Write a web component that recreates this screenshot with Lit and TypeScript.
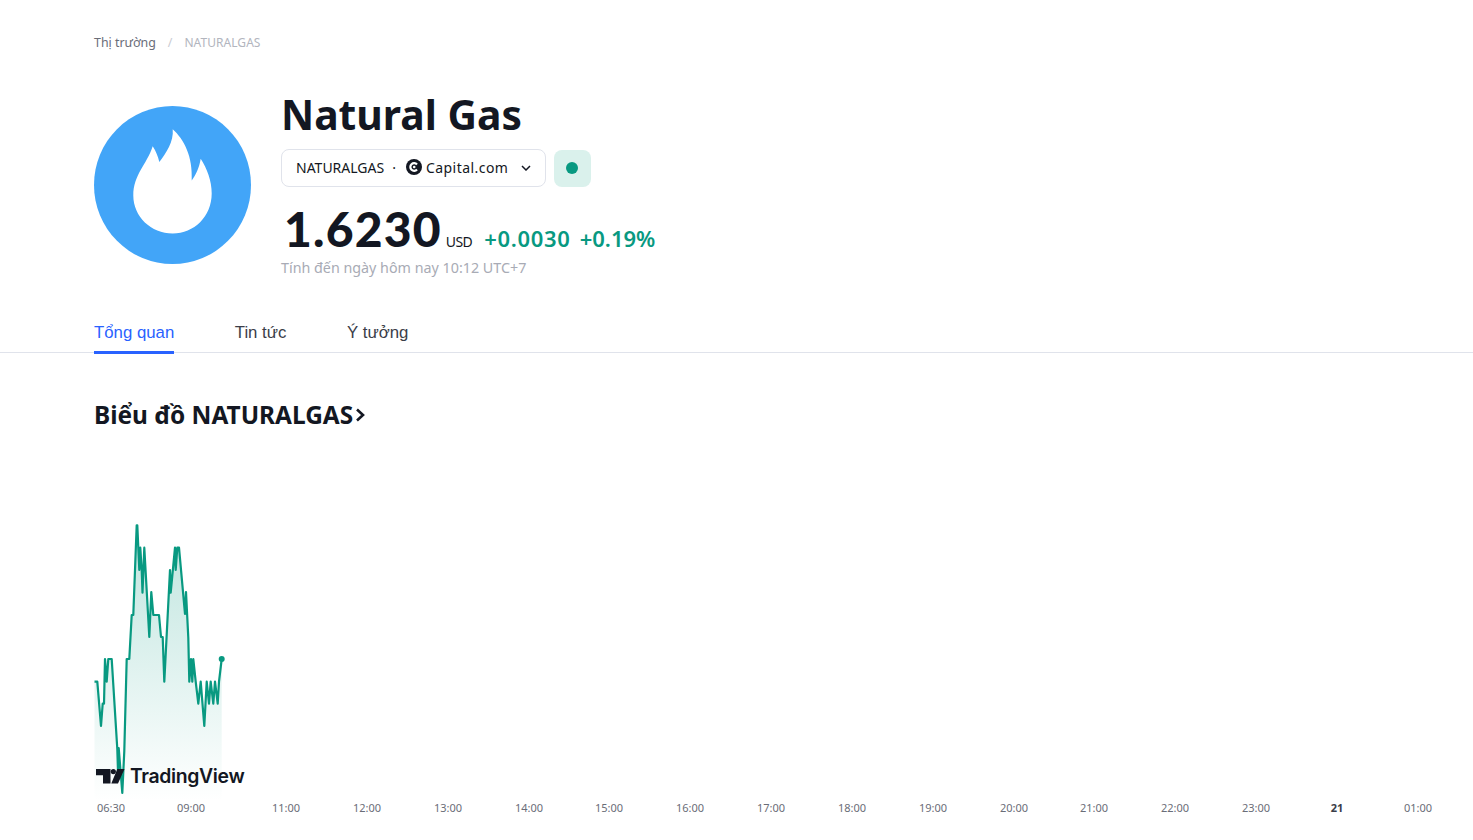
import { LitElement, html, css, svg } from "lit";
import { customElement } from "lit/decorators.js";

const PTS: [number, number][] = [[94.5,680.7],[97.3,680.7],[101,725],[102.7,702.7],[104,702.7],[105,658],[106.7,680.7],[108.3,658],[111.7,658],[117.3,748],[118,770],[118.7,747],[122.3,792],[124.3,750],[126.7,658],[129.3,658],[131.7,614],[133.3,614],[136.7,524.3],[137.3,524.3],[139.3,569],[140.3,546.7],[141.7,569],[142.5,591.7],[144.3,546.7],[149.3,636],[151.3,591],[153.3,614],[159,614],[161,636],[162.7,636],[164.3,680.7],[170,569],[170.7,591.7],[175,546.7],[175.7,569],[177.3,546.7],[179,546.7],[185,613],[186,591],[188.3,636.7],[189.3,680.7],[191,658],[192.3,680.7],[193.3,658],[195.7,680.7],[198.3,702.7],[200.7,680.7],[204.3,725],[206.7,680.7],[209,702.7],[210.7,680.7],[213.3,702.7],[215,680.7],[217.7,702.7],[219,680.7],[221.7,658]];
const TOP = 500;
const line = PTS.map(([x, y], i) => `${i ? "L" : "M"}${x} ${y - TOP}`).join(" ");
const area = `${line} L221.7 300 L94.5 300 Z`;
const TICKS: [string, number, boolean?][] = [["06:30",111],["09:00",191],["11:00",286],["12:00",367],["13:00",448],["14:00",529],["15:00",609],["16:00",690],["17:00",771],["18:00",852],["19:00",933],["20:00",1014],["21:00",1094],["22:00",1175],["23:00",1256],["21",1337,true],["01:00",1418]];

@customElement("app-root")
export class AppRoot extends LitElement {
  static styles = css`
    :host { display: block; height: 840px; overflow: hidden; background: #fff; color: #131722; font-family: "Noto Sans", "Liberation Sans", sans-serif; }
    .wrap { padding: 0 0 0 94px; }
    .crumbs { display: flex; align-items: center; height: 20px; padding-top: 32px; font-size: 12.4px; color: #6a6d78; }
    .crumbs .sep { margin: 0 12px; color: #c9cbd2; }
    .crumbs .cur { color: #b2b5be; font-size: 12px; letter-spacing: 0.05px; }
    .head { display: flex; gap: 30px; padding-top: 34px; }
    .logo { width: 157px; height: 158px; flex: none; margin-top: 20px; display: block; }
    .info { display: flex; flex-direction: column; align-items: flex-start; margin-top: 0; }
    h1 { margin: 0; font-size: 40.8px; line-height: 56px; font-weight: 700; letter-spacing: 0; }
    .pills { display: flex; align-items: flex-end; gap: 8px; margin-top: 7px; }
    .sym { display: flex; align-items: center; box-sizing: border-box; height: 38px; width: 265px; padding: 0 14px 2px; border: 1px solid #e0e3eb; border-radius: 8px; font-size: 14px; }
    .sym .dot { margin: 0 10px 0 8px; }
    .sym .ex { margin-right: 4px; flex: none; }
    .sym .chev { margin-left: auto; margin-top: 2px; flex: none; }
    .sym .ename { letter-spacing: 0.45px; }
    .status { display: flex; align-items: center; justify-content: center; width: 37px; height: 37px; border-radius: 8px; background: #daf1ec; }
    .status i { width: 12px; height: 12px; border-radius: 50%; background: #089981; margin: -2px 1px 0 0; }
    .price { display: flex; align-items: baseline; margin: 27px 0 0 3px; line-height: 30px; }
    .val { font-family: "Lato", "Noto Sans", sans-serif; font-size: 48px; font-weight: 900; letter-spacing: 1.2px; }
    .unit { font-size: 14px; letter-spacing: -0.6px; margin-left: 4px; }
    .chg { font-size: 22px; font-weight: 600; color: #089981; margin-left: 12px; }
    .chg.wide { letter-spacing: 0.7px; }
    .chg + .chg { margin-left: 9px; }
    .asof { font-size: 14.3px; color: #a8abb5; margin-top: 1px; line-height: 20px; }
    .tabs { display: flex; margin-top: 34px; padding-left: 94px; border-bottom: 1px solid #e0e3eb; height: 40px; font-family: "Liberation Sans", sans-serif; font-size: 16.8px; }
    .tab { box-sizing: border-box; height: 42px; padding-top: 9px; line-height: 24px; color: #3b3e49; margin-right: 60.500px; }
    .tab.on { color: #2962ff; border-bottom: 3px solid #2962ff; }
    h2 { margin: 44px 0 0 94px; font-size: 24.4px; line-height: 36px; font-weight: 700; display: flex; align-items: center; gap: 2px; }
    .chart { position: relative; height: 300px; margin-top: 68px; }
    .plot { display: block; width: 1473px; height: 300px; }
    .tv { position: absolute; left: 96px; top: 261px; display: flex; align-items: center; gap: 5px; font-family: "Inter", sans-serif; font-weight: 600; font-size: 19.400px; line-height: 28px; letter-spacing: -0.35px; color: #131722; }
    .axis { display: flex; height: 20px; margin-top: -3px; font-size: 11px; line-height: 20px; color: #6a6d78; font-family: "Noto Sans", sans-serif; }
    .tick { flex: none; text-align: center; }
    .tick.b { font-weight: 700; color: #3b3e49; }
  `;

  render() {
    let prev = 0;
    const ticks = TICKS.map(([t, c, b]) => {
      const half = 40;
      const left = c - half - prev;
      prev = c + half;
      return html`<span class="tick ${b ? "b" : ""}" style="width:80px;margin-left:${left}px">${t}</span>`;
    });
    return html`
      <div class="wrap">
        <div class="crumbs"><span>Thị trường</span><span class="sep">/</span><span class="cur">NATURALGAS</span></div>
        <div class="head">
          <svg class="logo" viewBox="0 0 157 157" preserveAspectRatio="none"><circle cx="78.5" cy="78.5" r="78.5" fill="#42a5f8"/><path fill="#fff" d="M78.7 23C80 35 72 47 65.3 55.700 64 50 62 45 58.700 40 53 58 39.3 68 39.3 89 39.3 110 57 126.700 78.700 126.700 100 126.700 117.700 110 117.700 87 117.700 74 113 62 106.700 52.300 105 62 102 68 97.700 74 99 50 90 33 78.700 23Z"/></svg>
          <div class="info">
            <h1>Natural Gas</h1>
            <div class="pills">
              <div class="sym">
                <span>NATURALGAS</span><span class="dot">·</span>
                <svg class="ex" width="16" height="16" viewBox="0 0 16 16"><circle cx="8" cy="8" r="8" fill="#131722"/><path d="M11 5.500A3.800 3.800 0 1 0 11 10.500" fill="none" stroke="#fff" stroke-width="2.200"/><circle cx="8.200" cy="8" r="1.300" fill="#fff"/></svg>
                <span class="ename">Capital.com</span>
                <svg class="chev" width="10" height="6" viewBox="0 0 10 6"><path d="M1 1l4 4 4-4" fill="none" stroke="#131722" stroke-width="1.500"/></svg>
              </div>
              <div class="status"><i></i></div>
            </div>
            <div class="price"><span class="val">1.6230</span><span class="unit">USD</span><span class="chg wide">+0.0030</span><span class="chg">+0.19%</span></div>
            <div class="asof">Tính đến ngày hôm nay 10:12 UTC+7</div>
          </div>
        </div>
      </div>
      <div class="tabs"><div class="tab on">Tổng quan</div><div class="tab">Tin tức</div><div class="tab">Ý tưởng</div></div>
      <h2>Biểu đồ NATURALGAS<svg width="10" height="14" viewBox="0 0 10 14"><path d="M2 1.500L8 7l-6 5.500" fill="none" stroke="#131722" stroke-width="2.600"/></svg></h2>
      <div class="chart">
        <svg class="plot" viewBox="0 0 1473 300">
          <defs><linearGradient id="g" x1="0" y1="0" x2="0" y2="1"><stop offset="0" stop-color="#089981" stop-opacity=".26"/><stop offset="1" stop-color="#089981" stop-opacity="0"/></linearGradient></defs>
          ${svg`<path d="${area}" fill="url(#g)"/><path d="${line}" fill="none" stroke="#089981" stroke-width="2.200" stroke-linejoin="round"/><circle cx="221.700" cy="158" r="3" fill="#089981"/>`}
        </svg>
        <div class="tv"><svg width="29" height="15" viewBox="0 0 29 15"><path fill="#131722" d="M0 0H14.500V14.500H7V6.300H0ZM21.300 0H28.500L22 14.500H15.300Z"/><circle cx="17.300" cy="2.600" r="2.600" fill="#131722"/></svg><span>TradingView</span></div>
      </div>
      <div class="axis">${ticks}</div>
    `;
  }
}
